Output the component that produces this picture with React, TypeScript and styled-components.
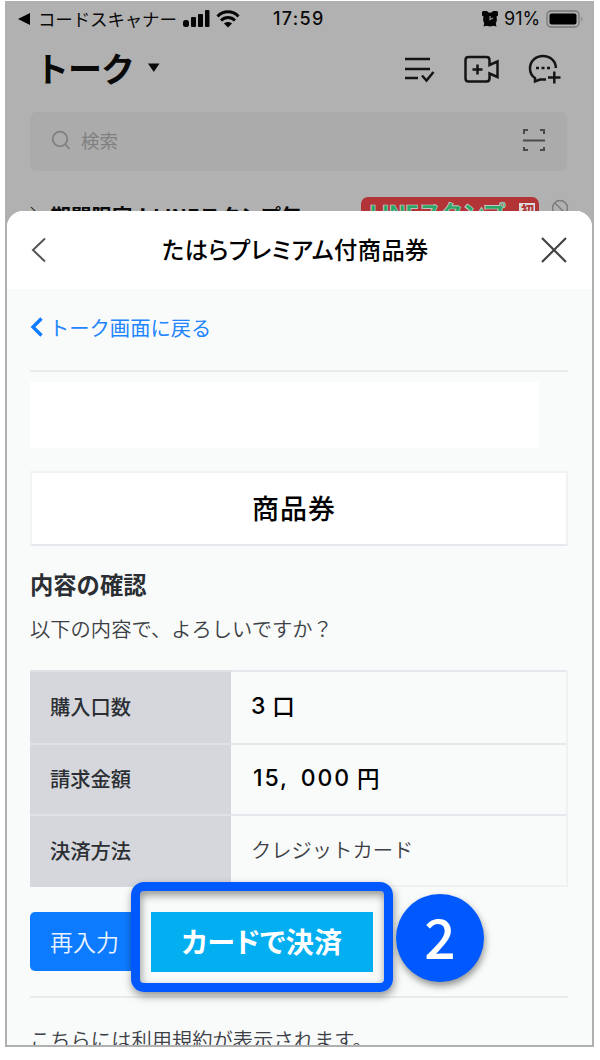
import React from "react";
import styled, { createGlobalStyle } from "styled-components";

const GlobalStyle = createGlobalStyle`
  * { box-sizing: border-box; }
  body { margin: 0; background: #fff; font-family: "Noto Sans CJK JP", sans-serif; }
  p, h1, h2 { margin: 0; }
`;

const Phone = styled.div`
  width: 589px;
  height: 1046px;
  margin: 1px 0 0 5px;
  border: 2px solid #b0b0b0;
  border-top-width: 1px;
  background: #f9fbfb;
  overflow: hidden;
  display: flex;
  flex-direction: column;
`;

const Backdrop = styled.div`
  height: 230px;
  flex: none;
  background: #b1b1b1;
  color: #0a0a0a;
  display: flex;
  flex-direction: column;
`;

const Row = styled.div`
  display: flex;
  align-items: center;
`;

const StatusBar = styled(Row)`
  height: 33px;
  flex: none;
  padding: 0 8px 0 11px;
  white-space: nowrap;
  svg { flex: none; }
`;

const BackApp = styled.span`
  width: 139px;
  margin: 0 6px 0 7px;
  font-size: 17.5px;
  line-height: 24px;
  letter-spacing: -0.15px;
`;

const Clock = styled.span`
  flex: 1;
  margin-left: 33px;
  font: 500 18px/24px Inter, sans-serif;
  letter-spacing: 1.3px;
`;

const Percent = styled.span`
  margin: 0 2px 0 6px;
  width: 40px;
  font: 400 18px/24px Inter, sans-serif;
  letter-spacing: 0;
`;

const TitleBar = styled(Row)`
  height: 77px;
  flex: none;
  padding: 0 31px 8px 28px;
`;

const Title = styled.h1`
  flex: 1;
  display: flex;
  align-items: center;
  gap: 14px;
  padding-bottom: 3px;
  font-size: 34px;
  line-height: 48px;
  font-weight: 700;
  letter-spacing: -1px;
`;

const Actions = styled(Row)`
  gap: 28px;
  padding-bottom: 1px;
`;

const SearchBox = styled(Row)`
  height: 59px;
  flex: none;
  margin: 0 25px 0 23px;
  padding: 0 20px 3px 21px;
  border-radius: 7px;
  background: #ababab;
  color: #808080;
`;

const SearchLabel = styled.span`
  flex: 1;
  margin-left: 10px;
  font-size: 18.5px;
  line-height: 26px;
`;

const Promo = styled(Row)`
  height: 34px;
  flex: none;
  margin-top: 26px;
  padding: 0 23px 0 23px;
  align-items: flex-start;
`;

const PromoText = styled.span`
  width: 331px;
  padding-top: 4px;
  font-size: 20.5px;
  line-height: 28px;
  font-weight: 700;
  white-space: nowrap;
`;

const PromoBanner = styled.div`
  width: 178px;
  height: 34px;
  padding: 1px 4px 0 8px;
  border-radius: 7px;
  background: #b23437;
  color: #2aa767;
  font-size: 23px;
  line-height: 28px;
  font-weight: 900;
  display: flex;
  justify-content: space-between;
  letter-spacing: -1.2px;
  -webkit-text-stroke: 0.7px #d5d5d5;
`;

const PromoTag = styled.span`
  width: 16px;
  height: 20px;
  margin-top: 5px;
  background: #dcdcdc;
  color: #b23437;
  font-size: 13px;
  line-height: 14px;
  text-align: center;
  -webkit-text-stroke: 0;
`;

const BanIcon = styled.svg`
  margin: 2px 0 0 12px;
`;

const Sheet = styled.main`
  flex: 1;
  margin-top: -21px;
  border-radius: 16px 16px 0 0;
  background: #f9fbfb;
  overflow: hidden;
`;

const SheetHeader = styled.header`
  height: 78px;
  padding: 0 25px 0 24px;
  background: #fff;
  display: flex;
  align-items: center;
  justify-content: space-between;
`;

const SheetTitle = styled.h2`
  width: 270px;
  margin: 0 0 2px 6px;
  font-size: 23.3px;
  line-height: 34px;
  font-weight: 500;
  color: #000;
  white-space: nowrap;
  font-feature-settings: "palt";
  letter-spacing: 0.4px;
`;

const Content = styled.div`
  width: 538px;
  margin-left: 23px;
`;

const BackLink = styled(Row)`
  height: 81px;
  padding-bottom: 5px;
  gap: 6px;
  color: #2285ff;
  font-size: 20.3px;
`;

const Divider = styled.hr`
  height: 2px;
  margin: 0;
  border: 0;
  background: #e8eaeb;
`;

const Blank = styled.div`
  width: 509px;
  height: 66px;
  margin: 10px 0 23px;
  background: #fff;
`;

const Product = styled.div`
  height: 75px;
  border: 2px solid #f0f2f4;
  border-bottom-color: #e5e8ec;
  background: #fff;
  color: #000;
  display: flex;
  align-items: center;
  justify-content: center;
  padding: 0 10px 2px 0;
  font-size: 27px;
  font-weight: 500;
  letter-spacing: 1px;
`;

const SectionTitle = styled.h2`
  margin-top: 21px;
  font-size: 23.3px;
  line-height: 34px;
  font-weight: 700;
  color: #2b2f34;
`;

const Lead = styled.p`
  margin: 12px 0 27px;
  font-size: 20.3px;
  line-height: 30px;
  font-weight: 350;
  color: #3c4045;
`;

const Details = styled.dl`
  margin: 0;
  height: 217px;
  display: grid;
  grid-template-columns: 201px 1fr;
  grid-template-rows: 73px 71px 73px;
  border-right: 2px solid #eff1f3;
  border-bottom: 2px solid #eff1f3;
`;

const Term = styled.dt`
  display: flex;
  align-items: center;
  padding: 0 0 3px 20px;
  border-top: 2px solid #dfe1e5;
  background: #d6d7dc;
  color: #2b2f34;
  font-size: 20.3px;
  font-weight: 500;
`;

const Value = styled.dd<{ $plain?: boolean }>`
  display: flex;
  align-items: center;
  margin: 0;
  padding: 0 0 5px 20px;
  border-top: 2px solid #e5e8ec;
  color: ${(p) => (p.$plain ? "#3c4045" : "#000")};
  font-size: ${(p) => (p.$plain ? "20.3px" : "22.5px")};
  font-weight: ${(p) => (p.$plain ? 350 : 500)};
`;

const Digits = styled.span<{ $gap?: number; $lead?: number }>`
  font-family: Inter, sans-serif;
  font-size: 23px;
  line-height: 30px;
  letter-spacing: 1.9px;
  word-spacing: 4px;
  padding-top: 2px;
  margin-left: ${(p) => p.$lead ?? 0}px;
  margin-right: ${(p) => p.$gap ?? 5}px;
`;

const ButtonRow = styled.div`
  position: relative;
  height: 109px;
  padding-top: 25px;
`;

const RetryButton = styled.button`
  width: 106px;
  height: 59px;
  padding: 0 0 2px 20px;
  border: 0;
  border-radius: 5px 0 0 5px;
  background: #0d7bff;
  color: #e9f3ff;
  font: 350 23px/34px "Noto Sans CJK JP", sans-serif;
  text-align: left;
`;

const Highlight = styled.div`
  position: absolute;
  left: 101px;
  top: -5px;
  width: 262px;
  height: 110px;
  padding: 21px 11px;
  border: 9px solid #0059ff;
  border-radius: 13px;
  box-shadow: 1px 4px 8px rgba(0, 0, 0, 0.42), inset 1px 4px 8px rgba(0, 0, 0, 0.42);
`;

const PayButton = styled.button`
  width: 222px;
  height: 60px;
  padding: 0 0 2px;
  border: 0;
  background: #03aff1;
  color: #fff;
  font: 700 28px/40px "Noto Sans CJK JP", sans-serif;
  font-feature-settings: "palt";
  letter-spacing: 0.3px;
  white-space: nowrap;
`;

const StepBadge = styled.div`
  position: absolute;
  left: 366px;
  top: 7px;
  width: 88px;
  height: 88px;
  padding-bottom: 7px;
  border-radius: 50%;
  background: #0059ff;
  color: #fff;
  box-shadow: 1px 4px 7px rgba(0, 0, 0, 0.42);
  display: flex;
  align-items: center;
  justify-content: center;
  font-size: 55px;
  font-weight: 500;
  line-height: 80px;
`;

const Terms = styled.p`
  margin-top: 26px;
  font-size: 20.3px;
  line-height: 30px;
  font-weight: 350;
  color: #3c4045;
  white-space: nowrap;
`;

export default function App() {
  return (
    <>
      <GlobalStyle />
      <Phone>
        <Backdrop>
          <StatusBar>
            <svg width="13" height="12"><path d="M0 6 12 0v12z" fill="#000" /></svg>
            <BackApp>コードスキャナー</BackApp>
            <svg width="27" height="18" fill="#050505">
              <rect x="0" y="10" width="6" height="7" rx="2.5" />
              <rect x="8" y="7" width="5" height="10" rx="1" />
              <rect x="15" y="4" width="5" height="13" rx="1" />
              <rect x="22" y="0" width="4.5" height="17" rx="1" />
            </svg>
            <svg width="24" height="18" viewBox="0 0 24 18" fill="none" stroke="#050505" strokeWidth="3" style={{ marginLeft: 6 }}>
              <path d="M1.500 6.500C7.500.3 16.500.3 22.500 6.500M5 10.500c4-4 10-4 14 0" />
              <path d="M12 17.500 8 13.500c2.300-2 5.700-2 8 0z" fill="#050505" stroke="none" />
            </svg>
            <Clock>17:59</Clock>
            <svg width="16" height="16" viewBox="0 0 16 16" fill="#050505">
              <circle cx="8" cy="8.500" r="6.900" />
              <path d="M0 4.500V1l1-1h4l2 2-5 4zM16 4.500V1l-1-1h-4L9 2l5 4zM1.500 15.500l1-4 3 3zM14.500 15.500l-1-4-3 3z" />
              <path d="M8 5v3.500l3-1.500" fill="none" stroke="#999" strokeWidth="1.200" />
            </svg>
            <Percent>91%</Percent>
            <svg width="38" height="18" viewBox="0 0 38 18">
              <rect x="1" y="1" width="32" height="16" rx="4" fill="none" stroke="#777" strokeWidth="1.300" />
              <rect x="3.500" y="3.500" width="27" height="11" rx="2" fill="#000" />
              <path d="M35.500 6.500q2 2.500 0 5z" fill="#777" />
            </svg>
          </StatusBar>

          <TitleBar>
            <Title>
              トーク
              <svg width="12" height="10"><path d="M0 .5h11.500L5.800 9z" fill="#0a0a0a" /></svg>
            </Title>
            <Actions>
              <svg width="32" height="28" viewBox="0 0 32 28" fill="none" stroke="#151515" strokeWidth="2.500">
                <path d="M1 4h25M1 14h25M1 23h13M18 20.500l4.500 5L29.500 17" />
              </svg>
              <svg width="36" height="28" viewBox="0 0 36 28" fill="none" stroke="#151515" strokeWidth="2.500">
                <path d="M4.500 2h18q3 0 3 3v5l8-3.500v15.500l-8-3.500v5q0 3-3 3h-18q-3 0-3-3V5q0-3 3-3zM8.500 14.500h10M13.500 9.500v10" />
              </svg>
              <svg width="33" height="30" viewBox="0 0 33 30" fill="none" stroke="#151515" strokeWidth="2.500">
                <path d="M27.800 14C28 7 22 2 15 2S2 7 2 14.500c0 4 1.800 7.500 5 9.500v3.500l5-2h6M20 23.500h12.500M26.300 17.500v12" />
                <path d="M8 14h3M13.500 14h3M19 14h3" />
              </svg>
            </Actions>
          </TitleBar>

          <SearchBox>
            <svg width="20" height="20" viewBox="0 0 20 20" fill="none" stroke="#808080" strokeWidth="1.800">
              <circle cx="9" cy="9" r="7.300" /><path d="m14 14 4.500 5" />
            </svg>
            <SearchLabel>検索</SearchLabel>
            <svg width="24" height="24" viewBox="0 0 24 24" fill="none" stroke="#4a4a4a" strokeWidth="2" style={{ marginRight: 1 }}>
              <path d="M2 6V2h4M18 2h4v4M2 19v3h4M18 22h4v-3M1 12.500h22" />
            </svg>
          </SearchBox>

          <Promo>
            <PromoText>＼期間限定！LINEスタンプ年</PromoText>
            <PromoBanner>
              LINEスタンプ
              <PromoTag>初</PromoTag>
            </PromoBanner>
            <BanIcon width="18" height="18" viewBox="0 0 18 18" fill="none" stroke="#7c7c7c" strokeWidth="1.500">
              <circle cx="9" cy="9" r="7.500" /><path d="m4 4 10 10" />
            </BanIcon>
          </Promo>
        </Backdrop>

        <Sheet>
          <SheetHeader>
            <svg width="16" height="26" viewBox="0 0 16 26" fill="none" stroke="#555" strokeWidth="2">
              <path d="M14 1.500 2 13l12 11.500" />
            </svg>
            <SheetTitle>たはらプレミアム付商品券</SheetTitle>
            <svg width="26" height="26" viewBox="0 0 26 26" fill="none" stroke="#444" strokeWidth="2.200">
              <path d="m1 1 24 24M25 1 1 25" />
            </svg>
          </SheetHeader>

          <Content>
            <BackLink>
              <svg width="13" height="20" viewBox="0 0 13 20" fill="none" stroke="#0d7bff" strokeWidth="3.400">
                <path d="M11.500 1.500 3 10l8.500 8.500" />
              </svg>
              トーク画面に戻る
            </BackLink>
            <Divider />
            <Blank />
            <Product>商品券</Product>
            <SectionTitle>内容の確認</SectionTitle>
            <Lead>以下の内容で、よろしいですか？</Lead>
            <Details>
              <Term>購入口数</Term>
              <Value><Digits>3</Digits>口</Value>
              <Term>請求金額</Term>
              <Value><Digits $lead={2} $gap={6}>15, 000</Digits>円</Value>
              <Term>決済方法</Term>
              <Value $plain>クレジットカード</Value>
            </Details>
            <ButtonRow>
              <RetryButton>再入力</RetryButton>
              <Highlight><PayButton>カードで決済</PayButton></Highlight>
              <StepBadge>2</StepBadge>
            </ButtonRow>
            <Divider />
            <Terms>こちらには利用規約が表示されます。</Terms>
          </Content>
        </Sheet>
      </Phone>
    </>
  );
}
